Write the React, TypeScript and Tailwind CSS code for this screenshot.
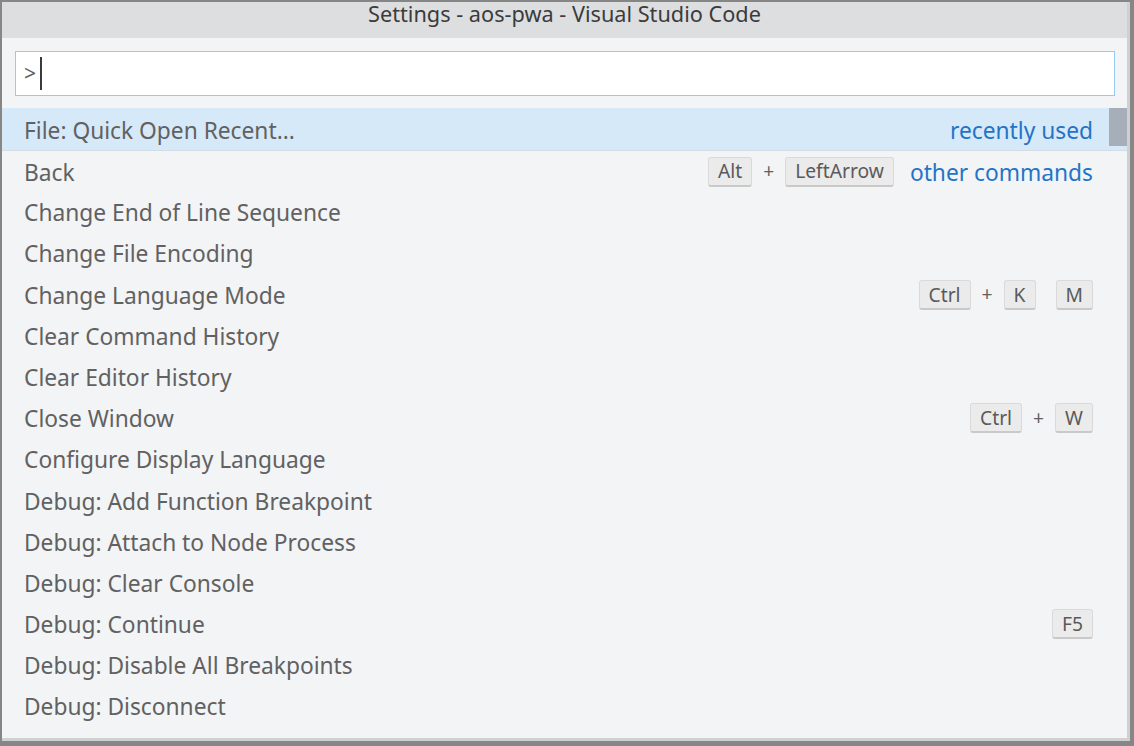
const font = { fontFamily: '"Segoe UI", "Noto Sans", "Open Sans", sans-serif' }

type Command = {
  label: string
  keys?: string[][]
  note?: string
}

const commands: Command[] = [
  { label: 'Back', keys: [['Alt', 'LeftArrow']], note: 'other commands' },
  { label: 'Change End of Line Sequence' },
  { label: 'Change File Encoding' },
  { label: 'Change Language Mode', keys: [['Ctrl', 'K'], ['M']] },
  { label: 'Clear Command History' },
  { label: 'Clear Editor History' },
  { label: 'Close Window', keys: [['Ctrl', 'W']] },
  { label: 'Configure Display Language' },
  { label: 'Debug: Add Function Breakpoint' },
  { label: 'Debug: Attach to Node Process' },
  { label: 'Debug: Clear Console' },
  { label: 'Debug: Continue', keys: [['F5']] },
  { label: 'Debug: Disable All Breakpoints' },
  { label: 'Debug: Disconnect' },
]

function Key({ k }: { k: string }) {
  return (
    <span className="h-[30px] px-[9px] flex items-center rounded-[3px] bg-[#ebebeb] border border-[#dadada] border-b-[#c9c9c9] border-b-2 text-[19.25px] text-[#5a5a5a] leading-none">
      {k}
    </span>
  )
}

function Chord({ chord }: { chord: string[] }) {
  return (
    <div className="flex items-center">
      {chord.map((k, i) => (
        <div key={i} className="flex items-center">
          {i > 0 && <span className="mx-[11px] text-[19.25px] text-[#616161]">+</span>}
          <Key k={k} />
        </div>
      ))}
    </div>
  )
}

function Row({ cmd, first }: { cmd: Command; first?: boolean }) {
  return (
    <div
      className={
        'h-[41.2px] flex items-center pl-[22px] pr-[34px] pt-[4px] text-[22.75px] text-[#616161] ' +
        (first ? 'border-t border-[#d3dbe5]' : '')
      }
    >
      <span className="flex-1 whitespace-nowrap">{cmd.label}</span>
      {cmd.keys && (
        <div className="flex items-center gap-[20px] -mt-[2px]">
          {cmd.keys.map((c, i) => (
            <Chord key={i} chord={c} />
          ))}
        </div>
      )}
      {cmd.note && <span className="ml-[16px] text-[#2374c6]">{cmd.note}</span>}
    </div>
  )
}

export default function App() {
  return (
    <div className="w-[1134px] h-[746px] bg-[#868686] pt-[2px] pl-[2px] pr-[4px] pb-[5px] overflow-hidden" style={font}>
      <div className="h-full flex flex-col bg-[#f3f4f6] border-r-[3px] border-b-[3px] border-[#d0d0d0]">
        <div className="h-[36px] shrink-0 bg-[#dddee0] flex items-center justify-center text-[21.7px] text-[#3b3b3b] pb-[12px]">
          Settings - aos-pwa - Visual Studio Code
        </div>

        <div className="pt-[13px] pl-[13px] pr-[12px]">
          <div className="h-[45px] bg-white border border-[#98c9ee] flex items-center pl-[8px] text-[21px] text-[#616161]">
            <span>&gt;</span>
            <span className="ml-[4px] w-[2px] h-[33px] bg-[#3a3a3a]" />
          </div>
        </div>

        <div className="relative mt-[12px] flex-1 overflow-hidden">
          <div className="h-[41.5px] flex items-center pl-[22px] pr-[34px] pt-[4px] text-[22.75px] text-[#616161] bg-[#d6e9f9]">
            <span className="flex-1">File: Quick Open Recent...</span>
            <span className="text-[#2374c6]">recently used</span>
          </div>
          {commands.map((c, i) => (
            <Row key={c.label} cmd={c} first={i === 0} />
          ))}
          <div className="absolute top-0 right-0 w-[18px] h-[38px] bg-[#a6afb9]" />
        </div>
      </div>
    </div>
  )
}
